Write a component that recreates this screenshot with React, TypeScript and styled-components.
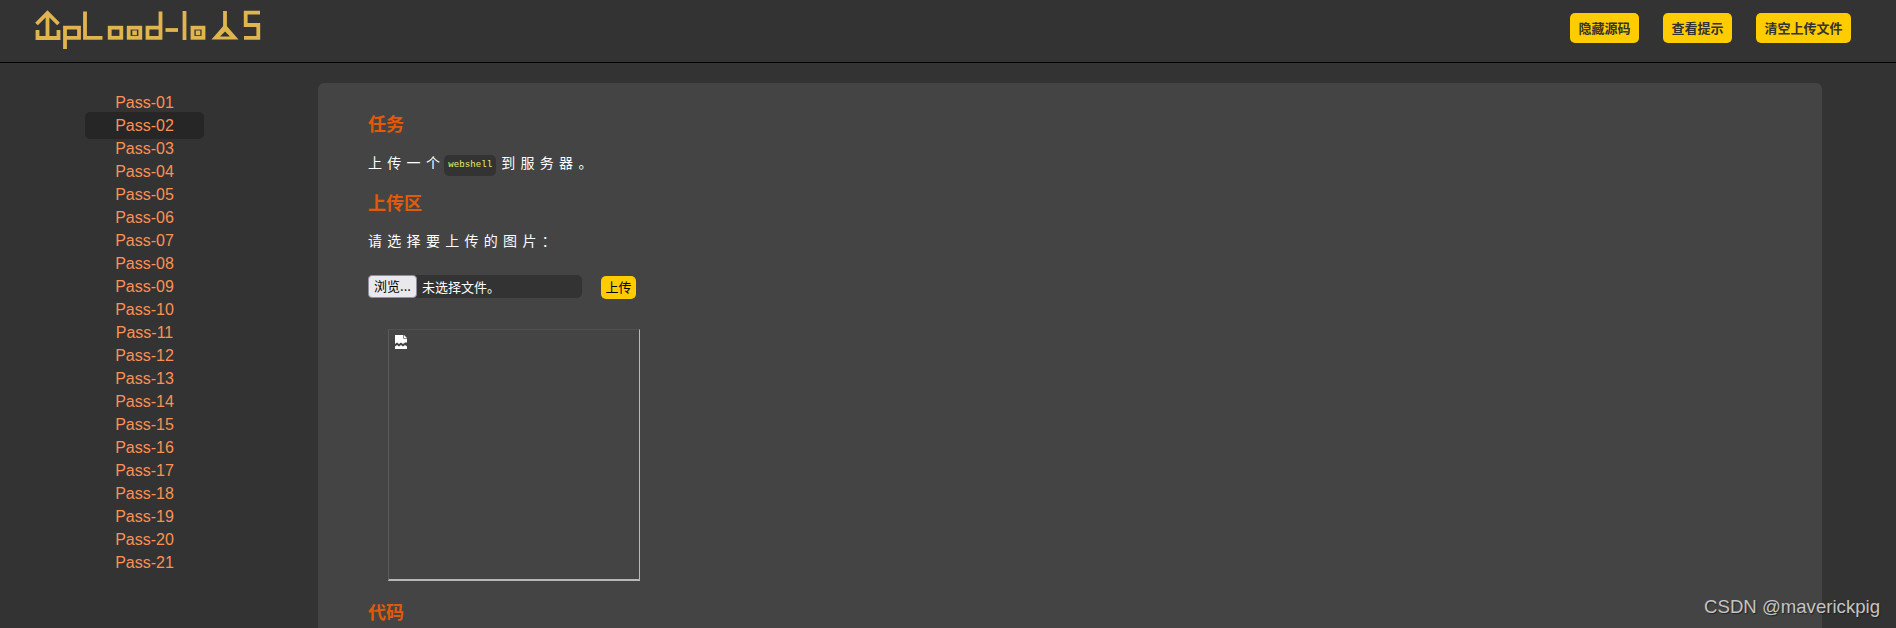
import React from 'react'
import styled, { createGlobalStyle } from 'styled-components'

const cjk = `"Noto Sans CJK SC", "Liberation Sans", sans-serif`

const GlobalStyle = createGlobalStyle`
  html, body {
    margin: 0;
    height: 628px;
    overflow: hidden;
    background: #333333;
  }
`

const Page = styled.div`
  position: relative;
  width: 1896px;
  height: 628px;
  overflow: hidden;
  background: #333333;
  font-family: "Liberation Sans", ${cjk};
`

const Header = styled.header`
  display: flex;
  align-items: flex-start;
  justify-content: space-between;
  height: 62px;
  padding-right: 45px;
  border-bottom: 1px solid #000000;
  box-sizing: content-box;
`

const Actions = styled.div`
  display: flex;
  gap: 24px;
  padding-top: 13px;
`

const ActionButton = styled.a`
  display: block;
  height: 30px;
  padding: 0 8.5px;
  border-radius: 5px;
  background: #ffcc00;
  color: #333333;
  font: bold 13px/29px ${cjk};
  text-align: center;
`

const Body = styled.div`
  display: flex;
  align-items: flex-start;
`

const Sidebar = styled.nav`
  flex: none;
  width: 318px;
  box-sizing: border-box;
  padding: 28px 0 0 85px;
`

const PassLink = styled.a<{ $active?: boolean }>`
  display: block;
  position: relative;
  width: 119px;
  height: 23px;
  color: #fb9154;
  font-size: 16px;
  line-height: 23px;
  text-align: center;

  ${(p) =>
    p.$active &&
    `
    height: 27px;
    margin: -2px 0;
    line-height: 27px;
    border-radius: 5px;
    background: #262626;
  `}
`

const Panel = styled.main`
  flex: none;
  width: 1504px;
  height: 700px;
  margin-top: 20px;
  box-sizing: border-box;
  padding: 27px 50px 0;
  border-radius: 6px;
  background: #444444;
  font-family: ${cjk};
`

const Heading = styled.h3<{ $top: number }>`
  margin: ${(p) => p.$top}px 0 0;
  color: #e25a08;
  font: bold 18px/26px ${cjk};
`

const Line = styled.p<{ $top: number }>`
  height: 21px;
  margin: ${(p) => p.$top}px 0 0;
  color: #ffffff;
  font-size: 14px;
  line-height: 21px;
  letter-spacing: 5.3px;
`

const Code = styled.code`
  display: inline-block;
  height: 21px;
  margin: 0 5px 0 -1px;
  padding: 0 4px;
  border-radius: 5px;
  background: #333333;
  color: #eef06a;
  font: 9px/21px "Liberation Mono", monospace;
  letter-spacing: 0.1px;
  vertical-align: 1px;
`

const UploadForm = styled.form`
  display: flex;
  align-items: flex-start;
  margin-top: 24px;
`

const FileField = styled.div`
  display: flex;
  align-items: center;
  width: 214px;
  height: 23px;
  border-radius: 5px;
  background: #333333;
  color: #ffffff;
  font-size: 13px;
`

const BrowseButton = styled.span`
  flex: none;
  width: 49px;
  height: 23px;
  margin-right: 5px;
  box-sizing: border-box;
  border: 1px solid #8f8f9d;
  border-radius: 4px;
  background: #e9e9ed;
  color: #000000;
  line-height: 20px;
  text-align: center;
`

const SubmitButton = styled.span`
  width: 35px;
  height: 23px;
  margin: 1px 0 0 19px;
  border-radius: 5px;
  background: #ffcc00;
  color: #000000;
  font-size: 13px;
  line-height: 22px;
  text-align: center;
`

const Preview = styled.div`
  width: 252px;
  height: 252px;
  margin: 30px 0 0 20px;
  box-sizing: border-box;
  padding: 5px 0 0 6px;
  border-style: solid;
  border-width: 1px 1px 2px 1px;
  border-color: #505050 #b8b8b8 #b8b8b8 #5a5a5a;
`

const Watermark = styled.div`
  position: absolute;
  right: 16px;
  bottom: 11px;
  color: #c4c4c4;
  font-size: 18.6px;
  line-height: 20px;
  text-shadow: 1px 1px 1px #222222;
`

const passes = Array.from({ length: 21 }, (_, i) => `Pass-${String(i + 1).padStart(2, '0')}`)

function Logo() {
  return (
    <svg width="280" height="56" viewBox="0 0 280 56" fill="none" stroke="#e0b44e" strokeWidth="3.8">
      <path d="M36.5 24 47.5 13 58.5 24M47.5 12V39M37.5 30V38H58.5V30" />
      <path d="M65 49V27.7H79V37.8H65" />
      <path d="M85 11.5V37.8H102.5" />
      <rect x="109.7" y="27.7" width="11.6" height="10.1" />
      <rect x="128.7" y="27.7" width="11.6" height="10.1" />
      <rect x="132.3" y="30.5" width="4.6" height="4.6" fill="#e0b44e" stroke="none" />
      <path d="M160.5 11.5V37.8H147.5V27.7H160.5" />
      <path d="M165.5 30H178" />
      <path d="M184.5 11V40" />
      <rect x="192.5" y="27.7" width="11" height="10.1" />
      <rect x="195.7" y="30.5" width="4.6" height="4.6" fill="#e0b44e" stroke="none" />
      <path d="M225 11V28" />
      <path
        d="M225 24 238.5 39.5H211.5ZM225 31.5 220 36.5H230Z"
        fill="#e0b44e"
        fillRule="evenodd"
        stroke="none"
      />
      <path d="M260 12.7H245.7V25H258.3V37.8H244" />
    </svg>
  )
}

function BrokenImage() {
  return (
    <svg width="12" height="14" viewBox="0 0 12 14" style={{ display: 'block' }}>
      <path d="M0 0H9L12 3V7.5H10L8 9 6 7.5 4 9 2 7.5 0 9Z" fill="#ffffff" />
      <path d="M0 11.5 2 10 4 11.5 6 10 8 11.5 10 10 12 11.5V14H0Z" fill="#ffffff" />
      <path d="M8.5 0V3.5H12" fill="none" stroke="#888888" />
    </svg>
  )
}

export default function App() {
  return (
    <Page>
      <GlobalStyle />
      <Header>
        <Logo />
        <Actions>
          <ActionButton>隐藏源码</ActionButton>
          <ActionButton>查看提示</ActionButton>
          <ActionButton>清空上传文件</ActionButton>
        </Actions>
      </Header>
      <Body>
        <Sidebar>
          {passes.map((pass) => (
            <PassLink key={pass} $active={pass === 'Pass-02'}>
              {pass}
            </PassLink>
          ))}
        </Sidebar>
        <Panel>
          <Heading $top={0}>任务</Heading>
          <Line $top={16}>
            上传一个<Code>webshell</Code>到服务器。
          </Line>
          <Heading $top={16}>上传区</Heading>
          <Line $top={15}>请选择要上传的图片：</Line>
          <UploadForm>
            <FileField>
              <BrowseButton>浏览...</BrowseButton>
              未选择文件。
            </FileField>
            <SubmitButton>上传</SubmitButton>
          </UploadForm>
          <Preview>
            <BrokenImage />
          </Preview>
          <Heading $top={17}>代码</Heading>
        </Panel>
      </Body>
      <Watermark>CSDN @maverickpig</Watermark>
    </Page>
  )
}
